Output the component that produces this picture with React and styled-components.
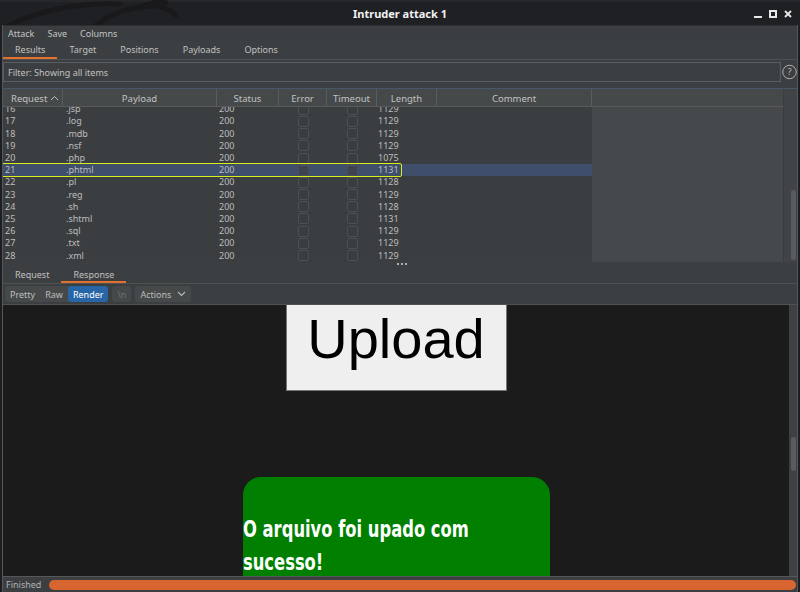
import React from "react";
import styled, { createGlobalStyle } from "styled-components";

const GlobalStyle = createGlobalStyle`
  html, body { margin: 0; padding: 0; background: #1d1e22; }
  body { font-family: "Noto Sans", "DejaVu Sans", sans-serif; }
  * { box-sizing: border-box; }
`;

const rows = [
  { n: 16, p: ".jsp", len: 1129 },
  { n: 17, p: ".log", len: 1129 },
  { n: 18, p: ".mdb", len: 1129 },
  { n: 19, p: ".nsf", len: 1129 },
  { n: 20, p: ".php", len: 1075 },
  { n: 21, p: ".phtml", len: 1131, selected: true },
  { n: 22, p: ".pl", len: 1128 },
  { n: 23, p: ".reg", len: 1129 },
  { n: 24, p: ".sh", len: 1128 },
  { n: 25, p: ".shtml", len: 1131 },
  { n: 26, p: ".sql", len: 1129 },
  { n: 27, p: ".txt", len: 1129 },
  { n: 28, p: ".xml", len: 1129 },
];

const columns = [
  { key: "req", label: "Request", w: 60 },
  { key: "payload", label: "Payload", w: 154 },
  { key: "status", label: "Status", w: 62 },
  { key: "error", label: "Error", w: 48 },
  { key: "timeout", label: "Timeout", w: 50 },
  { key: "length", label: "Length", w: 60 },
  { key: "comment", label: "Comment", w: 155 },
];

export default function App() {
  return (
    <>
      <GlobalStyle />
      <Screen>
        <TitleBar>
          <Dragon width="260" height="25" viewBox="0 0 260 25">
            <path d="M8 26 C40 10 80 2 120 4" />
            <path d="M95 26 C110 14 125 8 150 6 C160 5 168 9 176 15" />
            <path d="M140 8 C150 2 158 1 166 3" />
          </Dragon>
          <span />
          <Title>Intruder attack 1</Title>
          <Controls>
            <svg width="10" height="10" viewBox="0 0 10 10">
              <rect x="1" y="7" width="8" height="2" fill="#e8e8e8" />
            </svg>
            <svg width="10" height="10" viewBox="0 0 10 10">
              <rect x="2" y="2" width="6" height="6" fill="none" stroke="#e8e8e8" strokeWidth="2" />
            </svg>
            <svg width="10" height="10" viewBox="0 0 10 10">
              <path d="M2 2 L8 8 M8 2 L2 8" stroke="#e8e8e8" strokeWidth="1.8" />
            </svg>
          </Controls>
        </TitleBar>

        <Window>
          <MenuBar>
            <span>Attack</span>
            <span>Save</span>
            <span>Columns</span>
          </MenuBar>

          <TabBar>
            <Tab active>Results</Tab>
            <Tab>Target</Tab>
            <Tab>Positions</Tab>
            <Tab>Payloads</Tab>
            <Tab>Options</Tab>
          </TabBar>

          <FilterRow>
            <FilterBox>Filter: Showing all items</FilterBox>
            <Help>
              <svg width="16" height="16" viewBox="0 0 16 16">
                <circle cx="8" cy="8" r="7.2" fill="none" stroke="#b5b5b5" strokeWidth="1" />
                <text x="8" y="11.6" textAnchor="middle" fontSize="10" fill="#b5b5b5" fontFamily="Noto Sans, sans-serif">?</text>
              </svg>
            </Help>
          </FilterRow>

          <TableArea>
            <TableMain>
              <HeaderRow>
                {columns.map((c) => (
                  <HeadCell key={c.key} w={c.w} left={c.key === "req"}>
                    {c.label}
                    {c.key === "req" && (
                      <svg width="9" height="6" viewBox="0 0 9 6" style={{ marginLeft: 3 }}>
                        <path d="M1 5 L4.5 1.5 L8 5" fill="none" stroke="#c0c0c0" strokeWidth="1" />
                      </svg>
                    )}
                  </HeadCell>
                ))}
                <HeadFill />
              </HeaderRow>
              <Body>
                <RowsClip>
                  <RowsInner>
                    {rows.map((r) => (
                      <Row key={r.n} selected={r.selected}>
                        <Cell w={60} pad={2}>{r.n}</Cell>
                        <Cell w={154} pad={3}>{r.p}</Cell>
                        <Cell w={62} pad={2}>200</Cell>
                        <Cell w={48} center><Check /></Cell>
                        <Cell w={50} center><Check /></Cell>
                        <Cell w={60} pad={1}>{r.len}</Cell>
                        <Cell w={155} />
                        {r.selected && <Highlight />}
                      </Row>
                    ))}
                  </RowsInner>
                </RowsClip>
                <EmptyArea />
              </Body>
            </TableMain>
            <VScroll>
              <Thumb h={70} />
            </VScroll>
          </TableArea>

          <Grip>
            <Dot /><Dot /><Dot />
          </Grip>
          <SubTabBar>
            <Tab>Request</Tab>
            <Tab active>Response</Tab>
          </SubTabBar>

          <Toolbar>
            <Group>
              <ToolBtn>Pretty</ToolBtn>
              <ToolBtn>Raw</ToolBtn>
              <ToolBtn active>Render</ToolBtn>
            </Group>
            <Group>
              <ToolBtn dim>\n</ToolBtn>
            </Group>
            <Group>
              <ToolBtn>
                Actions
                <svg width="9" height="6" viewBox="0 0 9 6" style={{ marginLeft: 6 }}>
                  <path d="M1 1 L4.5 4.5 L8 1" fill="none" stroke="#b8b8b8" strokeWidth="1.1" />
                </svg>
              </ToolBtn>
            </Group>
          </Toolbar>

          <RenderArea>
            <RenderView>
              <Page>
                <UploadBox>Upload</UploadBox>
                <SuccessBox>
                  <SuccessText>O arquivo foi upado com sucesso!</SuccessText>
                </SuccessBox>
              </Page>
            </RenderView>
            <RenderScroll>
              <Thumb h={34} />
            </RenderScroll>
          </RenderArea>

          <StatusBar>
            <span>Finished</span>
            <Progress />
          </StatusBar>
        </Window>
      </Screen>
    </>
  );
}

const Screen = styled.div`
  width: 800px;
  height: 592px;
  overflow: hidden;
  background: #1d1e22;
  display: flex;
  flex-direction: column;
`;

const TitleBar = styled.div`
  position: relative;
  height: 25px;
  flex: none;
  display: grid;
  grid-template-columns: 1fr auto 1fr;
  align-items: center;
  background: #1f2024;
  border-top: 2px solid #26272b;
`;

const Dragon = styled.svg`
  position: absolute;
  left: 0;
  top: -2px;
  fill: none;
  stroke: #19191c;
  stroke-width: 5;
  stroke-linecap: round;
`;

const Title = styled.div`
  color: #f2f2f2;
  font-size: 11px;
  font-weight: 700;
`;

const Controls = styled.div`
  justify-self: end;
  display: flex;
  gap: 5px;
  padding-right: 7px;
`;

const Window = styled.div`
  flex: 1;
  min-height: 0;
  margin: 0 2px;
  display: flex;
  flex-direction: column;
  background: #3c3f41;
  border-left: 1px solid #55585a;
  border-right: 1px solid #55585a;
  color: #bbbbbb;
  font-size: 9px;
`;

const MenuBar = styled.div`
  height: 16px;
  flex: none;
  display: flex;
  align-items: center;
  gap: 13px;
  padding-left: 5px;
  background: #3b3e40;
  border-top: 1px solid #2c2e30;
  color: #c4c4c4;
`;

const TabBar = styled.div`
  height: 19px;
  flex: none;
  display: flex;
  border-bottom: 1px solid #4e5153;
`;

const SubTabBar = styled(TabBar)`
  height: 18px;
`;

const Tab = styled.div`
  display: flex;
  align-items: center;
  padding: 1px 12px 0;
  color: #c0c0c0;
  border-bottom: 2px solid ${(p) => (p.active ? "#e0702c" : "transparent")};
`;

const FilterRow = styled.div`
  height: 28px;
  flex: none;
  display: flex;
  padding: 2px 0 6px 0;
`;

const FilterBox = styled.div`
  flex: 1;
  display: flex;
  align-items: center;
  padding-left: 4px;
  border: 1px solid #5b5e60;
  color: #c0c0c0;
`;

const Help = styled.div`
  width: 16px;
  display: flex;
  align-items: center;
  justify-content: center;
  padding-left: 1px;
`;

const TableArea = styled.div`
  height: 174px;
  flex: none;
  display: grid;
  grid-template-columns: 1fr 14px;
  border-top: 1px solid #46566b;
  border-bottom: 1px solid #46566b;
`;

const TableMain = styled.div`
  display: flex;
  flex-direction: column;
  min-width: 0;
`;

const HeaderRow = styled.div`
  height: 18px;
  flex: none;
  display: flex;
  background: #45494a;
  border-bottom: 1px solid #57595b;
`;

const HeadCell = styled.div`
  width: ${(p) => p.w}px;
  flex: none;
  display: flex;
  align-items: center;
  justify-content: ${(p) => (p.left ? "flex-start" : "center")};
  padding-left: ${(p) => (p.left ? "8px" : "0")};
  padding-top: 1px;
  border-right: 1px solid #5a5d5f;
  color: #c2c2c2;
  font-size: 9.5px;
`;

const HeadFill = styled.div`
  flex: 1;
`;

const Body = styled.div`
  flex: 1;
  min-height: 0;
  display: flex;
`;

const RowsClip = styled.div`
  width: 589px;
  flex: none;
  overflow: hidden;
  background: #3b3e40;
`;

const RowsInner = styled.div`
  margin-top: -3.8px;
`;

const Row = styled.div`
  position: relative;
  height: 12.2px;
  display: flex;
  align-items: center;
  font-size: 9px;
  color: #bdbdbd;
  background: ${(p) => (p.selected ? "#3f4e6b" : "transparent")};
`;

const Cell = styled.div`
  width: ${(p) => p.w}px;
  flex: none;
  padding-left: ${(p) => p.pad || 0}px;
  display: flex;
  justify-content: ${(p) => (p.center ? "center" : "flex-start")};
  line-height: 12px;
`;

const Check = styled.div`
  width: 11px;
  height: 11px;
  border: 1px solid #4d5053;
  border-radius: 2px;
  background: rgba(58, 61, 63, 0.6);
`;

const Highlight = styled.div`
  position: absolute;
  left: -3px;
  top: -1px;
  width: 402px;
  height: 14px;
  border: 1.5px solid #d9ee1a;
  border-radius: 2px;
`;

const EmptyArea = styled.div`
  flex: 1;
  background: #46494b;
`;

const VScroll = styled.div`
  display: flex;
  flex-direction: column;
  justify-content: flex-end;
  align-items: flex-end;
  padding: 0 1px 2px 0;
  background: #414446;
  border-left: 1px solid #3a3c3e;
`;

const Thumb = styled.div`
  width: 5px;
  height: ${(p) => p.h}px;
  border-radius: 3px;
  background: #595c5f;
`;

const Grip = styled.div`
  height: 4px;
  flex: none;
  display: flex;
  justify-content: center;
  align-items: center;
  gap: 2px;
  padding-left: 3px;
`;

const Dot = styled.div`
  width: 2px;
  height: 2px;
  background: #b0b0b0;
`;

const Toolbar = styled.div`
  height: 21px;
  flex: none;
  display: flex;
  align-items: center;
  gap: 4px;
  padding-left: 2px;
  border-bottom: 1px solid #4f5254;
`;

const Group = styled.div`
  display: flex;
  height: 16px;
  background: #45494a;
  border-radius: 3px;
`;

const ToolBtn = styled.div`
  display: flex;
  align-items: center;
  padding: 0 5px;
  border-radius: 3px;
  color: ${(p) => (p.active ? "#ffffff" : p.dim ? "#6f7375" : "#bdbdbd")};
  background: ${(p) => (p.active ? "#2765a6" : "transparent")};
`;

const RenderArea = styled.div`
  flex: 1;
  min-height: 0;
  display: grid;
  grid-template-columns: 1fr 8px;
`;

const RenderView = styled.div`
  overflow: hidden;
  background: #1b1b1b;
`;

const Page = styled.div`
  display: flex;
  flex-direction: column;
  align-items: center;
  margin-top: -18px;
`;

const UploadBox = styled.div`
  width: 221px;
  height: 104px;
  display: flex;
  align-items: center;
  justify-content: center;
  background: #efefef;
  border: 1px solid #767676;
  color: #000;
  font-family: "Liberation Sans", Arial, sans-serif;
  font-size: 56px;
  padding-bottom: 2px;
`;

const SuccessBox = styled.div`
  width: 307px;
  height: 240px;
  margin-top: 86px;
  background: #007f00;
  border-radius: 18px;
  padding-top: 36px;
`;

const SuccessText = styled.div`
  width: 300px;
  color: #ffffff;
  font-family: "DejaVu Sans Condensed", "DejaVu Sans", sans-serif;
  font-size: 23px;
  font-weight: 700;
  line-height: 33px;
  transform: scaleX(0.79);
  transform-origin: left top;
`;

const RenderScroll = styled.div`
  display: flex;
  flex-direction: column;
  align-items: center;
  padding-top: 132px;
  background: #3e4143;
`;

const StatusBar = styled.div`
  height: 16px;
  flex: none;
  display: flex;
  align-items: center;
  gap: 8px;
  padding: 0 1px 0 3px;
  border-top: 1px solid #55585a;
  font-size: 9px;
  color: #b0b0b0;
`;

const Progress = styled.div`
  flex: 1;
  height: 10px;
  border-radius: 5px;
  background: #d8652f;
`;
